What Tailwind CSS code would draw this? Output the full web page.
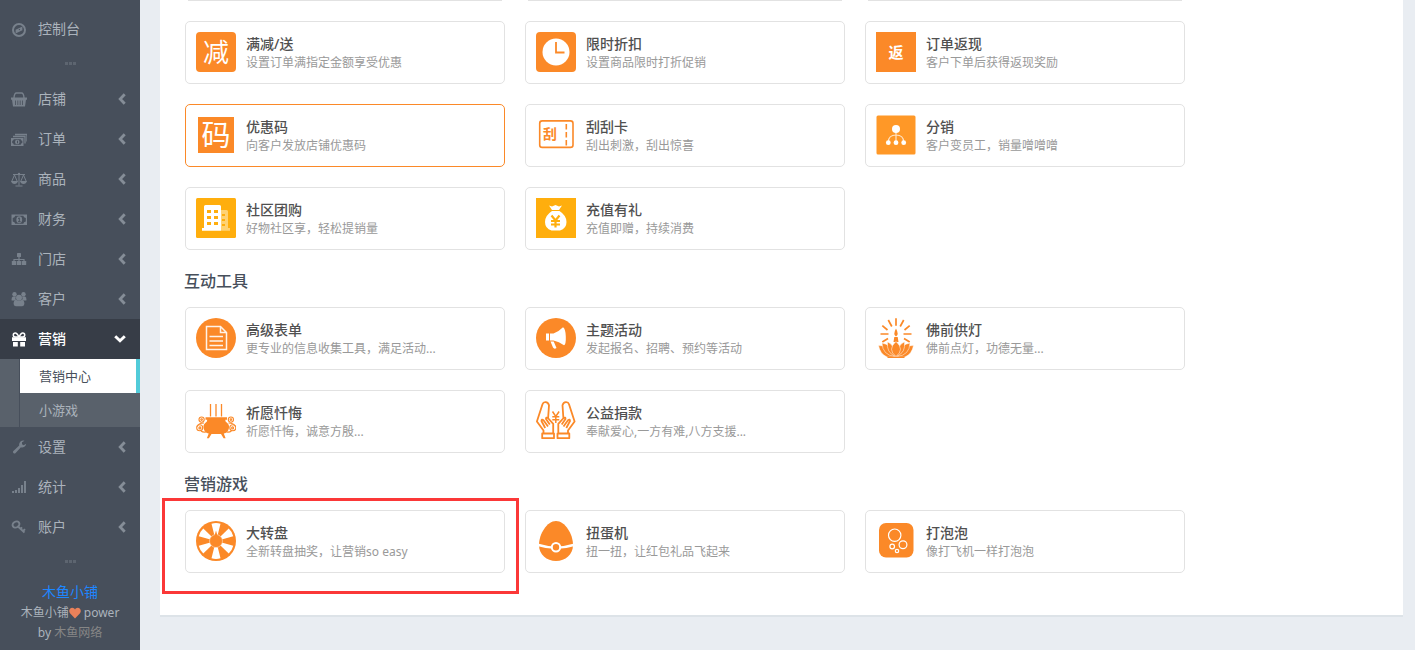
<!DOCTYPE html>
<html lang="zh-CN">
<head>
<meta charset="utf-8">
<meta name="viewport" content="width=device-width, initial-scale=1">
<title>营销中心</title>
<script src="https://cdn.jsdelivr.net/npm/@tailwindcss/browser@4"></script>
</head>
<body class="flex min-h-screen bg-[#e9edf2] font-['Noto_Sans','Noto_Sans_CJK_SC',sans-serif] text-xs">

<svg class="hidden" aria-hidden="true">
  <symbol id="left" viewBox="0 0 8 12"><path d="M6.700 1.200 L2.200 6 L6.700 10.800" fill="none" stroke="currentColor" stroke-width="2.800"/></symbol>
</svg>

<aside class="flex w-[140px] shrink-0 flex-col bg-[#474f5b] pt-[9px] text-sm text-[#abb3bc]">
  <nav>
    <a href="#" class="flex h-10 items-center gap-[11px] pl-[11px]">
      <svg class="size-4 text-[#78818c]" viewBox="0 0 16 16" fill="currentColor"><circle cx="8" cy="9" r="6" fill="none" stroke="currentColor" stroke-width="2"/><path d="M11.400 5.600v3.700l-6.800 3.100V8.700z"/><path d="M7.500 8.500l1.500-.8v1.600z" fill="#474f5b"/></svg>
      <span>控制台</span>
    </a>
    <div class="flex h-[30px] items-center justify-center gap-px pb-px"><i class="h-[3px] w-[3px] bg-[#5d6570]"></i><i class="h-[3px] w-[3px] bg-[#5d6570]"></i><i class="h-[3px] w-[3px] bg-[#5d6570]"></i></div>

    <a href="#" class="flex h-10 items-center gap-[11px] pr-3.5 pl-[11px]">
      <svg class="size-4 text-[#78818c]" viewBox="0 0 16 16" fill="currentColor"><path d="M3 7C3.200 3.500 4 2 5.500 2h5C12 2 12.800 3.500 13 7" fill="none" stroke="currentColor" stroke-width="1.400"/><path d="M0 6.500h16v2.200H15l-1 6.800H2L1 8.700H0z"/><path d="M4.500 9.500v4.500M6.800 9.500v4.500M9.200 9.500v4.500M11.500 9.500v4.500" stroke="#474f5b" stroke-width=".8"/></svg>
      <span class="flex-1">店铺</span><svg class="h-3 w-2 text-[#858d97]"><use href="#left"/></svg>
    </a>
    <a href="#" class="flex h-10 items-center gap-[11px] pr-3.5 pl-[11px]">
      <svg class="size-4 text-[#78818c]" viewBox="0 0 16 16" fill="currentColor"><path d="M4 3.500h12v7M2 5.500h12v7" fill="none" stroke="currentColor" stroke-width="1.300"/><path d="M0 7h12.500v8H0z"/><path d="M2.800 8.300h6.900q.2 1.400 1.600 1.600v2.200q-1.400.2-1.600 1.600H2.800q-.2-1.400-1.600-1.600V9.900q1.400-.2 1.600-1.600z" fill="#474f5b"/><circle cx="6.300" cy="11" r="2.300"/><path d="M6.500 9.700v2.600" stroke="#474f5b"/></svg>
      <span class="flex-1">订单</span><svg class="h-3 w-2 text-[#858d97]"><use href="#left"/></svg>
    </a>
    <a href="#" class="flex h-10 items-center gap-[11px] pr-3.5 pl-[11px]">
      <svg class="size-4 text-[#78818c]" viewBox="0 0 16 16" fill="none" stroke="currentColor"><path d="M2 3.500h12M8 2v12.500M4.500 15h7M3.500 4L.7 10.500M3.500 4l2.800 6.500M12.500 4L9.700 10.500M12.500 4l2.800 6.500"/><circle cx="8" cy="3" r="1.200" fill="currentColor" stroke="none"/><path d="M0 10h7q-.8 3-3.500 3T0 10zM9 10h7q-.8 3-3.500 3T9 10z" fill="currentColor" stroke="none"/></svg>
      <span class="flex-1">商品</span><svg class="h-3 w-2 text-[#858d97]"><use href="#left"/></svg>
    </a>
    <a href="#" class="flex h-10 items-center gap-[11px] pr-3.5 pl-[11px]">
      <svg class="size-4 text-[#78818c]" viewBox="0 0 16 16" fill="currentColor"><path d="M.5 3.500h15.500v10.500H.5z"/><path d="M4.200 4.700h8.100q.3 2 2.500 2.300v3.500q-2.200.3-2.500 2.300H4.200q-.3-2-2.500-2.300V7q2.200-.3 2.500-2.300z" fill="#474f5b"/><ellipse cx="8.250" cy="8.750" rx="2.900" ry="3.400"/><path d="M7 7.600l1.300-.7v3.600M7 10.700h2.600" fill="none" stroke="#474f5b"/></svg>
      <span class="flex-1">财务</span><svg class="h-3 w-2 text-[#858d97]"><use href="#left"/></svg>
    </a>
    <a href="#" class="flex h-10 items-center gap-[11px] pr-3.5 pl-[11px]">
      <svg class="size-4 text-[#78818c]" viewBox="0 0 16 16" fill="currentColor"><rect x="6" y="2" width="4" height="4" rx=".6"/><path d="M8 6v5M3 11V8.500h10V11" fill="none" stroke="currentColor" stroke-width="1.200"/><rect x=".8" y="10" width="4.400" height="4" rx=".6"/><rect x="5.800" y="10" width="4.400" height="4" rx=".6"/><rect x="10.800" y="10" width="4.400" height="4" rx=".6"/></svg>
      <span class="flex-1">门店</span><svg class="h-3 w-2 text-[#858d97]"><use href="#left"/></svg>
    </a>
    <a href="#" class="flex h-10 items-center gap-[11px] pr-3.5 pl-[11px]">
      <svg class="size-4 text-[#78818c]" viewBox="0 0 16 16" fill="currentColor"><circle cx="3.500" cy="3.300" r="2.200"/><circle cx="12.500" cy="3.300" r="2.200"/><path d="M.5 8.900q0-3 1.500-3.300h3q-1.200 2 0 3.800H1.500q-1 0-1-.5zM15.500 8.900q0-3-1.500-3.300h-3q1.200 2 0 3.800h3.500q1 0 1-.5z"/><circle cx="8" cy="6.700" r="3"/><path d="M2.600 12.800q0-3.500 2.400-4 3 2 6 0 2.400.5 2.400 4 0 2.400-2.200 2.400H4.800q-2.200 0-2.200-2.400z"/></svg>
      <span class="flex-1">客户</span><svg class="h-3 w-2 text-[#858d97]"><use href="#left"/></svg>
    </a>
    <a href="#" aria-expanded="true" class="flex h-10 items-center gap-[11px] bg-[#373d47] pr-3.5 pl-[11px] font-medium text-white">
      <svg class="size-4" viewBox="0 0 16 16" fill="currentColor"><path d="M1 6.300h5.800v3.700H1zM9.200 6.300H15v3.700H9.200zM2 11h4.800v4.500H2zM9.200 11H14v4.500H9.200zM6.800 6.300h2.400v3.700H6.800z"/><path d="M8 6C6.500 3 5.500 2 4.300 2a1.900 1.900 0 0 0 0 4zM8 6c1.500-3 2.500-4 3.700-4a1.900 1.900 0 0 1 0 4z" fill="none" stroke="currentColor" stroke-width="1.500"/></svg>
      <span class="flex-1">营销</span><svg class="h-2 w-3" viewBox="0 0 12 8"><path d="M1.200 1.200L6 5.800l4.800-4.600" fill="none" stroke="currentColor" stroke-width="2.900"/></svg>
    </a>
    <div class="bg-[#59616b] pl-[19px] text-[13px]">
      <div class="border-l border-[#474f5b]">
        <a href="#" class="flex h-[34px] items-center border-r-4 border-[#51cbd9] bg-white pl-[19px] text-[#474f5b]">营销中心</a>
        <a href="#" class="flex h-[34px] items-center pl-[19px]">小游戏</a>
      </div>
    </div>
    <a href="#" class="flex h-10 items-center gap-[11px] pr-3.5 pl-[11px]">
      <svg class="size-4 text-[#78818c]" viewBox="0 0 16 16" fill="currentColor"><path d="M2.400 12L8.200 6.500A4.200 4.200 0 0 1 13.500 1.700L11 3.300v2l1.700 1 2.500-1.500a4.200 4.200 0 0 1-5.300 3.500L4.400 14.200a1.500 1.500 0 0 1-2-2.200z"/></svg>
      <span class="flex-1">设置</span><svg class="h-3 w-2 text-[#858d97]"><use href="#left"/></svg>
    </a>
    <a href="#" class="flex h-10 items-center gap-[11px] pr-3.5 pl-[11px]">
      <svg class="size-4 text-[#78818c]" viewBox="0 0 16 16" fill="currentColor"><path d="M1 12h2v2H1zM4 11h2v3H4zM7 9h2v5H7zM10 6h2v8h-2zM13 2h2v12h-2z"/></svg>
      <span class="flex-1">统计</span><svg class="h-3 w-2 text-[#858d97]"><use href="#left"/></svg>
    </a>
    <a href="#" class="flex h-10 items-center gap-[11px] pr-3.5 pl-[11px]">
      <svg class="size-4 text-[#78818c]" viewBox="0 0 16 16" fill="none" stroke="currentColor" stroke-width="1.900"><ellipse cx="5" cy="5.500" rx="3.600" ry="2.900" transform="rotate(-30 5 5.500)"/><path d="M7 7.500l6.500 6M12 12.200l2-2M9.500 10l1.600-1.600"/></svg>
      <span class="flex-1">账户</span><svg class="h-3 w-2 text-[#858d97]"><use href="#left"/></svg>
    </a>
    <div class="flex h-[30px] items-center justify-center gap-px pb-px"><i class="h-[3px] w-[3px] bg-[#5d6570]"></i><i class="h-[3px] w-[3px] bg-[#5d6570]"></i><i class="h-[3px] w-[3px] bg-[#5d6570]"></i></div>
  </nav>
  <footer class="px-3 pt-[5px] text-center text-xs leading-5">
    <a href="#" class="block text-sm leading-5 text-[#1e86ff]">木鱼小铺</a>
    <p class="pt-px">木鱼小铺<svg class="inline h-3 w-3 align-[-2px]" viewBox="0 0 12 12"><path d="M6 11.500L1 6.300C-.8 4 .8.800 3.200.8 4.600.8 5.500 1.600 6 2.600 6.500 1.600 7.400.8 8.800.8c2.400 0 4 3.200 2.200 5.500z" fill="#e9815a"/></svg> power<br>by <a href="#" class="text-[#868686]">木鱼网络</a></p>
  </footer>
</aside>

<main class="min-w-0 flex-1 pr-3 pl-5">
  <div class="border-b-2 border-[#dde3e8] bg-white px-[25px] pb-[42px] text-[#999]">
    <div class="grid grid-cols-[repeat(auto-fill,320px)] gap-5 pb-5" aria-hidden="true">
      <div class="mx-[3px] h-px bg-[#e2e2e2]"></div><div class="mx-[3px] h-px bg-[#e2e2e2]"></div><div class="mx-[3px] h-px bg-[#e2e2e2]"></div>
    </div>

    <section class="grid grid-cols-[repeat(auto-fill,320px)] gap-5 leading-5">
      <a href="#" class="flex gap-2.5 rounded-[5px] border border-[#e2e2e2] px-2.5 pt-2.5 pb-2.5">
        <span class="grid size-10 place-items-center rounded-[4px] bg-[#fb8928] text-[26px] leading-10 font-normal text-white">减</span>
        <div class="pt-[3px]"><h3 class="text-sm leading-[18px] font-medium text-[#505050]">满减/送</h3><p>设置订单满指定金额享受优惠</p></div>
      </a>
      <a href="#" class="flex gap-2.5 rounded-[5px] border border-[#e2e2e2] px-2.5 pt-2.5 pb-2.5">
        <svg class="size-10" viewBox="0 0 40 40"><rect width="40" height="40" rx="4" fill="#fb8928"/><circle cx="20" cy="20" r="13.500" fill="#fff"/><path d="M20 10v10.500h8.500" fill="none" stroke="#fb8928" stroke-width="1.800"/></svg>
        <div class="pt-[3px]"><h3 class="text-sm leading-[18px] font-medium text-[#505050]">限时折扣</h3><p>设置商品限时打折促销</p></div>
      </a>
      <a href="#" class="flex gap-2.5 rounded-[5px] border border-[#e2e2e2] px-2.5 pt-2.5 pb-2.5">
        <span class="grid size-10 place-items-center bg-[#fb8928] text-[15px] leading-10 font-bold text-white">返</span>
        <div class="pt-[3px]"><h3 class="text-sm leading-[18px] font-medium text-[#505050]">订单返现</h3><p>客户下单后获得返现奖励</p></div>
      </a>
      <a href="#" class="flex gap-2.5 rounded-[5px] border border-[#fb8928] px-2.5 pt-2.5 pb-2.5">
        <span class="grid size-10 place-items-center"><span class="grid size-9 place-items-center bg-[#fb8928] text-[29px] leading-9 text-white">码</span></span>
        <div class="pt-[3px]"><h3 class="text-sm leading-[18px] font-medium text-[#505050]">优惠码</h3><p>向客户发放店铺优惠码</p></div>
      </a>
      <a href="#" class="flex gap-2.5 rounded-[5px] border border-[#e2e2e2] px-2.5 pt-2.5 pb-2.5">
        <svg class="size-10 font-bold" viewBox="0 0 40 40"><rect x="3.700" y="5.900" width="33.300" height="26.500" rx="2.500" fill="none" stroke="#fb8928" stroke-width="1.600"/><path d="M30.300 9v21.500" stroke="#fb8928" stroke-width="1.600" stroke-dasharray="5.500 2.500"/><text x="7" y="24" font-size="14" fill="#fb8928">刮</text></svg>
        <div class="pt-[3px]"><h3 class="text-sm leading-[18px] font-medium text-[#505050]">刮刮卡</h3><p>刮出刺激，刮出惊喜</p></div>
      </a>
      <a href="#" class="flex gap-2.5 rounded-[5px] border border-[#e2e2e2] px-2.5 pt-2.5 pb-2.5">
        <svg class="size-10" viewBox="0 0 40 40"><rect x=".5" y=".5" width="39" height="39" rx="1.500" fill="#ff9827"/><path d="M20 14v13M12.300 27q.2-7 7.700-7t7.700 7" fill="none" stroke="#ffe3c4" stroke-width="1.200"/><g fill="#fff"><circle cx="20" cy="14" r="4"/><circle cx="12.300" cy="27.700" r="2.400"/><circle cx="20" cy="27.700" r="2.400"/><circle cx="27.700" cy="27.700" r="2.400"/></g></svg>
        <div class="pt-[3px]"><h3 class="text-sm leading-[18px] font-medium text-[#505050]">分销</h3><p>客户变员工，销量噌噌噌</p></div>
      </a>
      <a href="#" class="flex gap-2.5 rounded-[5px] border border-[#e2e2e2] px-2.5 pt-2.5 pb-2.5">
        <svg class="size-10" viewBox="0 0 40 40"><rect width="40" height="40" rx="1.500" fill="#ffae0d"/><path d="M25 12h5.500q1.500 0 1.500 1.500V30h2v2.700h-9z" fill="#ffd273"/><path d="M8 8.500Q8 7 9.500 7h14Q25 7 25 8.500v24.200H6V30h2z" fill="#fff"/><path d="M11 12h4v3h-4zM18 12h4v3h-4zM11 18h4v3h-4zM18 18h4v3h-4zM11 24h4v3h-4zM18 24h4v3h-4zM26 16h3v2h-3zM26 21h3v2h-3zM26 26h3v2h-3z" fill="#ffae0d"/></svg>
        <div class="pt-[3px]"><h3 class="text-sm leading-[18px] font-medium text-[#505050]">社区团购</h3><p>好物社区享，轻松提销量</p></div>
      </a>
      <a href="#" class="flex gap-2.5 rounded-[5px] border border-[#e2e2e2] px-2.5 pt-2.5 pb-2.5">
        <svg class="size-10" viewBox="0 0 40 40"><rect width="40" height="40" fill="#ffae0d"/><path d="M13 7.500l3 1 3.500-1.500 3.500 1.500 3-1-3 4.500h-7zM16 13h7.500q7 4.500 7 11t-6.500 8.500h-8.500Q9 30.500 9 24T16 13z" fill="#fff"/><path d="M15.500 17.500l4 5 4-5M19.500 22v7.500M15 23h9M15 26.500h9" fill="none" stroke="#ffae0d" stroke-width="2.200"/></svg>
        <div class="pt-[3px]"><h3 class="text-sm leading-[18px] font-medium text-[#505050]">充值有礼</h3><p>充值即赠，持续消费</p></div>
      </a>
    </section>

    <h2 class="-ml-px pt-[19px] pb-3.5 text-base leading-6 font-medium text-[#474f5b]">互动工具</h2>
    <section class="grid grid-cols-[repeat(auto-fill,320px)] gap-5 leading-5">
      <a href="#" class="flex gap-2.5 rounded-[5px] border border-[#e2e2e2] px-2.5 pt-2.5 pb-2.5">
        <svg class="size-10" viewBox="0 0 40 40"><circle cx="20" cy="20" r="20" fill="#fb8928"/><path d="M10.500 8.500h14l6 6v17h-20zM24.500 8.500v6h6M13.500 18.500h13.500M13.500 23h13.500M13.500 27.500h13.500" fill="none" stroke="#fff3e8" stroke-width="1.500"/></svg>
        <div class="pt-[3px]"><h3 class="text-sm leading-[18px] font-medium text-[#505050]">高级表单</h3><p>更专业的信息收集工具，满足活动...</p></div>
      </a>
      <a href="#" class="flex gap-2.5 rounded-[5px] border border-[#e2e2e2] px-2.5 pt-2.5 pb-2.5">
        <svg class="size-10" viewBox="0 0 40 40"><circle cx="20" cy="20" r="20" fill="#fb8928"/><path d="M10 15.500h3v7h-3zM14 15.500h3.500Q23 13.500 27 9.300q2.500 1.200 2.800 9.200t-1.800 8.700Q23 23.500 17.500 22.500H14zM14.500 23.500h3.200l2.800 6.500q-2.300 1.500-3.500-.5z" fill="#fff"/></svg>
        <div class="pt-[3px]"><h3 class="text-sm leading-[18px] font-medium text-[#505050]">主题活动</h3><p>发起报名、招聘、预约等活动</p></div>
      </a>
      <a href="#" class="flex gap-2.5 rounded-[5px] border border-[#e2e2e2] px-2.5 pt-2.5 pb-2.5">
        <svg class="size-10" viewBox="0 0 40 40"><path d="M20 .3v7.500M12.300 2l3.500 6.500M27.700 2l-3.500 6.500M6.300 7.700l5.200 4.300M33.700 7.700L28.500 12M4.500 16h8M35.500 16h-8M6.300 24l5.700-3.500M33.700 24L28 20.500" stroke="#fb8928" stroke-width="1.700"/><path d="M20 10.500q3.300 6 0 8-3.300-2 0-8zM18.300 19h3.400l.8 5h-5z" fill="#fb8928"/><g fill="#fb8928" stroke="#fff" stroke-width=".5"><path d="M2.500 27.500q9-1 15 11.500H11Q4 36 2.500 27.500zM37.500 27.500q-9-1-15 11.500H29q7-3 8.500-11.500z"/><path d="M6 25q9 1 12.500 13.500Q6.500 37 6 25zM34 25q-9 1-12.500 13.500Q33.500 37 34 25z"/><path d="M11.500 23.800q7 3 8 14.700-9.500-4-8-14.700zM28.500 23.800q-7 3-8 14.700 9.500-4 8-14.700z"/><path d="M20 23.500q9 8 0 15-9-7 0-15z"/></g><path d="M11.500 38.500h17V40h-17z" fill="#fb8928"/></svg>
        <div class="pt-[3px]"><h3 class="text-sm leading-[18px] font-medium text-[#505050]">佛前供灯</h3><p>佛前点灯，功德无量...</p></div>
      </a>
      <a href="#" class="flex gap-2.5 rounded-[5px] border border-[#e2e2e2] px-2.5 pt-2.5 pb-2.5">
        <svg class="size-10" viewBox="0 0 40 40"><path d="M14.500 3v12.500M20 3v12.500M25.500 3v12.500" stroke="#fb8928" stroke-width="1.300"/><path d="M9.500 16.300h21.500v2.400h-1.700q-.3 2 1.700 3 2.800 2 1.800 6t-5 4.800l1.800 4.700h-2l-2.600-4.200h-9.500l-2.600 4.200h-2l1.800-4.700q-4-.8-5-4.800t1.800-6q2-1 1.700-3H9.500z" fill="#fb8928"/><g id="curl" fill="none" stroke="#fb8928" stroke-width="1.100"><circle cx="3.700" cy="26.800" r="3"/><circle cx="3.900" cy="26.900" r="1"/><circle cx="5.600" cy="18.600" r="2.600"/><circle cx="5.600" cy="18.600" r=".8"/><path d="M1 25.500q1.500-3.500 7-3.500M5 30q2 1.500 5 1"/></g><use href="#curl" transform="matrix(-1 0 0 1 40.500 0)"/></svg>
        <div class="pt-[3px]"><h3 class="text-sm leading-[18px] font-medium text-[#505050]">祈愿忏悔</h3><p>祈愿忏悔，诚意方殷...</p></div>
      </a>
      <a href="#" class="flex gap-2.5 rounded-[5px] border border-[#e2e2e2] px-2.5 pt-2.5 pb-2.5">
        <svg class="size-10" viewBox="0 0 40 40"><g id="hand" fill="none" stroke="#fb8928" stroke-width="1.800" stroke-linejoin="round"><path d="M6.200 32.500h11.800v4.700H6.200zM7.500 32v-2.500L.9 20.500 6.500 3.200Q7.200 1 9.700 1.200t3.300 3l-.9 13M17.200 32V22.800l-5.300-5.800q-2-1.200-1.900 1l3.800 5.500M12 25.500l-4.500-6.300q-2-1.500-2 .8l3.700 7"/></g><use href="#hand" transform="matrix(-1 0 0 1 39.500 0)"/><path d="M16.500 10.500l3.300 5 3.300-5M19.800 15.500V22M16.300 15.800h7M16.300 18.800h7" fill="none" stroke="#fb8928" stroke-width="1.500"/></svg>
        <div class="pt-[3px]"><h3 class="text-sm leading-[18px] font-medium text-[#505050]">公益捐款</h3><p>奉献爱心,一方有难,八方支援...</p></div>
      </a>
    </section>

    <h2 class="-ml-px pt-[19px] pb-3.5 text-base leading-6 font-medium text-[#474f5b]">营销游戏</h2>
    <section class="grid grid-cols-[repeat(auto-fill,320px)] gap-5 leading-5">
      <div class="relative">
        <a href="#" class="flex gap-2.5 rounded-[5px] border border-[#e2e2e2] px-2.5 pt-2.5 pb-2.5">
          <svg class="size-10" viewBox="0 0 40 40"><circle cx="20" cy="20" r="20" fill="#fb8928"/><g fill="#fff"><path id="w" d="M18.200 13.500L15.500 2.700q4.500-1.400 9 0l-2.700 10.800z"/><use href="#w" transform="rotate(60 20 20)"/><use href="#w" transform="rotate(120 20 20)"/><use href="#w" transform="rotate(180 20 20)"/><use href="#w" transform="rotate(240 20 20)"/><use href="#w" transform="rotate(300 20 20)"/></g><circle cx="20" cy="20" r="6.400" fill="none" stroke="#fff" stroke-opacity=".5"/><path d="M20 9.500l1.500 5.300a5.600 5.600 0 1 1-3 0z" fill="#fb8928"/></svg>
          <div class="pt-[3px]"><h3 class="text-sm leading-[18px] font-medium text-[#505050]">大转盘</h3><p>全新转盘抽奖，让营销so easy</p></div>
        </a>
        <div class="pointer-events-none absolute -top-3 -right-3.5 -bottom-[21px] -left-[23px] border-3 border-[#fb3838]"></div>
      </div>
      <a href="#" class="flex gap-2.5 rounded-[5px] border border-[#e2e2e2] px-2.5 pt-2.5 pb-2.5">
        <svg class="size-10" viewBox="0 0 40 40"><path d="M20 0C29 0 37 13 37 24c0 9.500-7.500 16-17 16S3 33.500 3 24C3 13 11 0 20 0z" fill="#fb8928"/><path d="M2.500 24Q20 29.500 37.500 24" fill="none" stroke="#fff" stroke-width="2.400"/><circle cx="20" cy="26.300" r="4.200" fill="#fb8928" stroke="#fff" stroke-width="2"/></svg>
        <div class="pt-[3px]"><h3 class="text-sm leading-[18px] font-medium text-[#505050]">扭蛋机</h3><p>扭一扭，让红包礼品飞起来</p></div>
      </a>
      <a href="#" class="flex gap-2.5 rounded-[5px] border border-[#e2e2e2] px-2.5 pt-2.5 pb-2.5">
        <svg class="size-10" viewBox="0 0 40 40"><rect x="3" y="2" width="34.500" height="34.500" rx="7" fill="#fb8928"/><g fill="none" stroke="#fff" stroke-width="1.200"><circle cx="18.700" cy="14.200" r="6.200"/><circle cx="27" cy="23.700" r="3.900"/><circle cx="16.200" cy="25.500" r="2.300"/><circle cx="21" cy="30" r="1.700"/></g></svg>
        <div class="pt-[3px]"><h3 class="text-sm leading-[18px] font-medium text-[#505050]">打泡泡</h3><p>像打飞机一样打泡泡</p></div>
      </a>
    </section>
  </div>
</main>
</body>
</html>
